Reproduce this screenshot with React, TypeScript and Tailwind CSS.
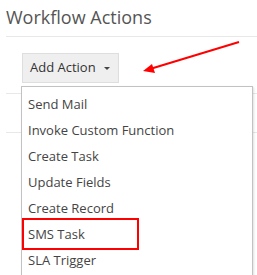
import React from 'react';

const actions = [
  'Send Mail',
  'Invoke Custom Function',
  'Create Task',
  'Update Fields',
  'Create Record',
  'SMS Task',
  'SLA Trigger',
];

export default function App() {
  return (
    <div
      className="relative w-[257px] h-[275px] overflow-hidden bg-white text-[#444]"
      style={{ fontFamily: '"Open Sans", "Liberation Sans", sans-serif' }}
    >
      <div className="pl-[6px]">
        <h1 className="pt-[4px] h-[37px] text-[18px] leading-[26px] font-normal text-[#555] border-b border-[#e8e8e8]">
          Workflow Actions
        </h1>
      </div>

      <div className="pl-[22px] pt-[16px]">
        <button className="flex items-center gap-[8px] h-[30px] w-[97px] pl-[7px] bg-[#efefef] border border-[#dedede] text-[13px] text-[#333]">
          Add Action
          <span className="w-0 h-0 border-l-[3px] border-r-[3px] border-t-[3px] border-l-transparent border-r-transparent border-t-[#444]" />
        </button>
      </div>

      {/* table rows behind the menu */}
      <div className="mt-[10px] ml-[6px] border-t border-[#e8e8e8] h-[39px]" />
      <div className="ml-[6px] border-t border-[#e8e8e8]" />

      <div className="absolute left-[21px] top-[86px] w-[232px] h-[210px] bg-white border border-[#c2c2c2] shadow-[1px_1px_2px_rgba(0,0,0,0.12)] pt-[5px]">
        {actions.map((a) => (
          <div key={a} className="h-[26px] flex items-center pl-[6px] text-[13px] text-[#444]">
            {a}
          </div>
        ))}
      </div>

      {/* annotations */}
      <div className="absolute left-[22px] top-[218px] w-[117px] h-[32px] border-2 border-[#f00]" />
      <svg className="absolute left-0 top-0" width="257" height="275">
        <line x1="239" y1="42" x2="150" y2="69" stroke="#f00" strokeWidth="2" />
        <polygon points="143,71 152,64 155,73" fill="#f00" />
      </svg>
    </div>
  );
}
